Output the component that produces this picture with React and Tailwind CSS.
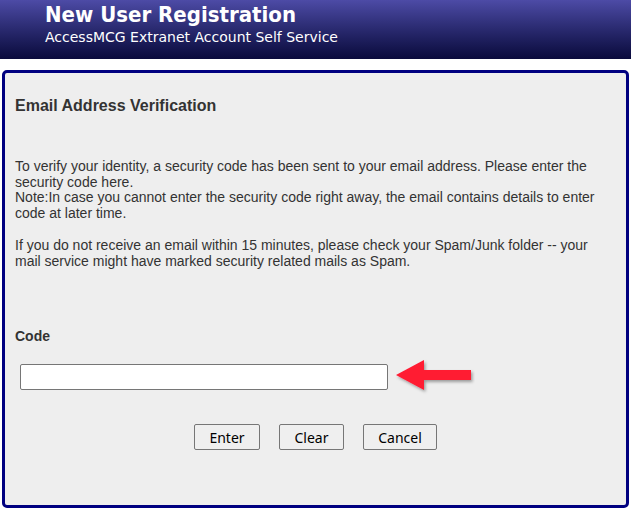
export default function App() {
  return (
    <div className="w-[631px] h-[510px] bg-white overflow-hidden">
      {/* header banner */}
      <div className="h-[59px] bg-gradient-to-b from-[#4d4ba6] to-[#0a0a3c] pl-[45px] pt-[2px] text-white">
        <div className="text-[22px] font-bold leading-[26px]" style={{ fontFamily: '"DejaVu Sans Condensed", "DejaVu Sans", sans-serif' }}>New User Registration</div>
        <div className="text-[14px] leading-[18px]" style={{ fontFamily: '"DejaVu Sans", sans-serif' }}>AccessMCG Extranet Account Self Service</div>
      </div>

      <div className="mx-[2px] mt-[11px] h-[438px] border-[3px] border-[#000080] rounded-[5px] bg-[#eeeeee] px-[10px] pt-[24px] text-[#333333]" style={{ fontFamily: '"Liberation Sans", Arial, sans-serif' }}>
        <h1 className="text-[16px] font-bold leading-[18px]">Email Address Verification</h1>

        <div className="mt-[44px] text-[14px] leading-[15.7px]">
          <p>
            To verify your identity, a security code has been sent to your email address. Please enter the security code here.
            <br />
            Note:In case you cannot enter the security code right away, the email contains details to enter code at later time.
          </p>
          <p className="mt-[16px]">
            If you do not receive an email within 15 minutes, please check your Spam/Junk folder -- your mail service might have marked security related mails as Spam.
          </p>
        </div>

        <div className="mt-[59px] text-[14px] font-bold leading-[16px]">Code</div>

        <div className="mt-[15px] flex items-center">
          <input type="text" className="ml-[5px] w-[368px] h-[26px] bg-white border border-[#767676] rounded-[2px] outline-none" />
          <svg width="82" height="36" viewBox="0 0 82 36" className="ml-[5px]">
            <defs>
              <filter id="sh" x="-20%" y="-20%" width="150%" height="160%">
                <feDropShadow dx="1.5" dy="2" stdDeviation="1.5" floodColor="#000" floodOpacity="0.35" />
              </filter>
            </defs>
            <polygon points="3,16 31,1 31,11 78,11 78,21 31,21 31,31" fill="#ff1a33" filter="url(#sh)" />
          </svg>
        </div>

        <div className="mt-[29px] flex justify-center gap-[19px]" style={{ fontFamily: '"Noto Sans", "Open Sans", sans-serif' }}>
          <button className="w-[66px] h-[26px] border border-[#767676] rounded-[2px] bg-[#efefef] text-[14px] text-black">Enter</button>
          <button className="w-[65px] h-[26px] border border-[#767676] rounded-[2px] bg-[#efefef] text-[14px] text-black">Clear</button>
          <button className="w-[74px] h-[26px] border border-[#767676] rounded-[2px] bg-[#efefef] text-[14px] text-black">Cancel</button>
        </div>
      </div>
    </div>
  );
}
